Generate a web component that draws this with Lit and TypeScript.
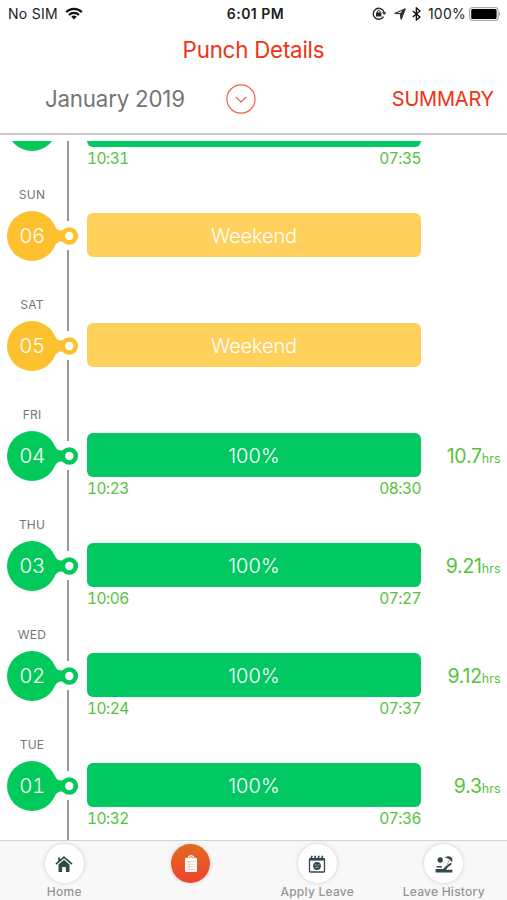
import { LitElement, html, css, svg, nothing } from "lit";
import { customElement, property } from "lit/decorators.js";
import { classMap } from "lit/directives/class-map.js";

interface Punch {
  day: string;
  date: string;
  weekend?: boolean;
  from?: string;
  to?: string;
  hours?: string;
}

const PUNCHES: Punch[] = [
  { day: "", date: "", from: "10:31", to: "07:35" },
  { day: "SUN", date: "06", weekend: true },
  { day: "SAT", date: "05", weekend: true },
  { day: "FRI", date: "04", from: "10:23", to: "08:30", hours: "10.7" },
  { day: "THU", date: "03", from: "10:06", to: "07:27", hours: "9.21" },
  { day: "WED", date: "02", from: "10:24", to: "07:37", hours: "9.12" },
  { day: "TUE", date: "01", from: "10:32", to: "07:36", hours: "9.3" },
];

@customElement("status-bar")
class StatusBar extends LitElement {
  static styles = css`
    :host { display: grid; grid-template-columns: 1fr auto 1fr; align-items: center; height: 27px; padding: 0 6px 0 8px; font-size: 14px; color: #1c1c1c; }
    .left, .right { display: flex; align-items: center; }
    .right { justify-content: flex-end; }
    .sim { letter-spacing: 0.3px; }
    .wifi { margin-left: 7px; }
    .time { font-weight: 600; font-size: 14px; letter-spacing: 0.5px; padding-left: 2px; }
    .lock { margin-right: 7px; }
    .arrow { margin-right: 6px; }
    .bt { margin-right: 7px; }
    .pct { margin-right: 3px; letter-spacing: 0.25px; }
    svg { display: block; }
  `;
  render() {
    return html`
      <div class="left">
        <span class="sim">No SIM</span>
        <svg class="wifi" width="18" height="13" viewBox="0 0 18 13" fill="none" stroke="#111" stroke-width="2.2">
          <path d="M1.2 5.1a11 11 0 0 1 15.6 0" /><path d="M4 8a7.1 7.1 0 0 1 10 0" />
          <path d="M9 12.6 6.2 9.8a4 4 0 0 1 5.6 0Z" fill="#111" stroke="none" />
        </svg>
      </div>
      <span class="time">6:01 PM</span>
      <div class="right">
        <svg class="lock" width="15" height="13" viewBox="0 0 15 13" fill="none" stroke="#222" stroke-width="1.3">
          <path d="M11.5 9.6A5.5 5.5 0 1 1 12 5" /><path d="M10 5.2h4.4l-2.2 2.9Z" fill="#222" stroke="none" />
          <rect x="4" y="5.5" width="5.4" height="4" fill="#222" stroke="none" /><path d="M5.3 6V4.9a1.4 1.4 0 0 1 2.8 0V6" stroke-width="1" />
        </svg>
        <svg class="arrow" width="12" height="12" viewBox="0 0 12 12" fill="none" stroke="#333" stroke-width="1.2" stroke-linejoin="round">
          <path d="M11 1 7.2 10.8 6.5 5.7 1 5.3Z" /><path d="M11 1 6.5 5.7 7.2 10.8Z" fill="#333" />
        </svg>
        <svg class="bt" width="9" height="14" viewBox="0 0 9 14" fill="none" stroke="#111" stroke-width="1.4">
          <path d="M.8 4 8 10 4.4 13V1L8 4 .8 10" />
        </svg>
        <span class="pct">100%</span>
        <svg width="32" height="14" viewBox="0 0 32 14">
          <rect x=".6" y=".6" width="28.6" height="12.8" rx="3" fill="#fff" stroke="#aaa" stroke-width="1.2" />
          <rect x="2.2" y="2" width="25.4" height="10" rx="1.6" fill="#000" />
          <path d="M30.2 5a2.4 2.4 0 0 1 0 4Z" fill="#999" />
        </svg>
      </div>
    `;
  }
}

@customElement("punch-row")
class PunchRow extends LitElement {
  @property({ attribute: false }) punch!: Punch;
  static styles = css`
    :host { display: block; }
    .row { display: grid; grid-template-columns: 87px 334px 1fr; height: 110px; box-sizing: border-box; --bar: #02c863; color: #56c23c; }
    .row.weekend { --bar: #ffd05c; }
    .side { background: linear-gradient(#999 0 40px, transparent 40px 69px, #999 69px) 66.5px 0 / 2px 100% no-repeat; }
    .day { width: 64px; height: 30px; line-height: 28px; text-align: center; font-size: 12px; color: #757575; letter-spacing: 0.2px; }
    .bubble { display: grid; grid-template-columns: 7px 50px 1fr; height: 50px; align-items: center; }
    .bubble svg { grid-area: 1 / 1 / 2 / 4; display: block; }
    .date { grid-area: 1 / 2; z-index: 1; text-align: center; font-size: 20.5px; line-height: 24px; color: #fff; font-weight: 350; font-variant-numeric: tabular-nums; letter-spacing: -0.4px; }
    .main { padding-top: 32px; }
    .bar { height: 44px; line-height: 47px; border-radius: 6px; background: var(--bar); color: #fff; text-align: center; font-size: 20px; font-weight: 350; letter-spacing: 0.1px; }
    .weekend .bar { letter-spacing: -0.15px; }
    .times { display: flex; justify-content: space-between; font-size: 15.5px; line-height: 24px; letter-spacing: -0.5px; font-variant-numeric: tabular-nums; }
    .hours { text-align: right; padding: 42px 6.5px 0 0; font-size: 19.5px; line-height: 26px; letter-spacing: -0.25px; white-space: nowrap; }
    .unit { font-size: 12.5px; letter-spacing: 0; }
  `;
  render() {
    const p = this.punch;
    const tone = p.weekend ? "#fdc02f" : "#02ca5a";
    return html`
      <div class=${classMap({ row: true, weekend: !!p.weekend })}>
        <div class="side">
          <div class="day">${p.day}</div>
          <div class="bubble">
            <svg width="87" height="50" viewBox="0 0 87 50">
              <circle cx="32" cy="25" r="25" fill=${tone} />
              <path d="M54 14Q57 20 62 19.5L66 18V32L62 30.5Q57 30 54 36Z" fill=${tone} />
              <circle cx="69.3" cy="25" r="6.5" fill="#fff" stroke=${tone} stroke-width="4.6" />
            </svg>
            <span class="date">${p.date}</span>
          </div>
        </div>
        <div class="main">
          <div class="bar">${p.weekend ? "Weekend" : p.date ? "100%" : nothing}</div>
          ${p.from ? html`<div class="times"><span>${p.from}</span><span>${p.to}</span></div>` : nothing}
        </div>
        <div class="hours">${p.hours ? html`${p.hours}<span class="unit">hrs</span>` : nothing}</div>
      </div>
    `;
  }
}

const ICONS = {
  home: svg`<path d="M1 9.2 9 2.2l8 7" fill="none" stroke="#34484f" stroke-width="1.7"/><path d="M3.5 9.6 9 4.8l5.5 4.8V17h-3.6v-5H7.1v5H3.5Z" fill="#34484f"/><path d="M3.2 2.6h2v2.6l-2 1.8Z" fill="#34484f"/>`,
  punch: svg`<path d="M3.5 3.4h11v13h-11Z" fill="#fff" stroke="#fff" stroke-linejoin="round"/><path d="M6 3.5a3 3 0 0 1 6 0" fill="#fff" stroke="#fff"/><path d="M6.9 3.4a2.1 1.7 0 0 1 4.2 0" fill="none" stroke="#e7632b" stroke-width=".9"/><path d="M5 6.7h8M5 9.3h8M5 11.9h8M5 14.5h8M7.2 6v9.6" stroke="#f6b9a8" stroke-width=".7"/>`,
  apply: svg`<rect x="1.5" y="3.6" width="15" height="13.4" rx=".8" fill="#fff" stroke="#34484f" stroke-width="1.3"/><path d="M1.5 3.6h15v2h-15Z" fill="#34484f"/><path d="m3 4 1-3.2M6.5 4l1-3.2M10 4l1-3.2M13.5 4l1-3.2" stroke="#34484f" stroke-width="1.6"/><circle cx="9" cy="11" r="3.9" fill="#34484f"/><path d="M6.8 9.5 8.4 10M9.7 10l1.6-.5M7.2 12.7q1.8-1.8 3.6 0" fill="none" stroke="#fff" stroke-width=".6"/>`,
  history: svg`<circle cx="5.2" cy="5" r="2.7" fill="#34484f"/><path d="M10 2.4Q14.4-.2 17.4 3.6L17.2 7.4Q14.6 3.4 10 2.4Z" fill="#34484f"/><path d="m14.8 3.6-2.6 6" stroke="#7d9199" stroke-width=".8"/><path d="M.6 14h7.4l3-3 4.8-3.2 1.2 1.2-4.4 3.6L11 14.8h6.4V17.4H.6Z" fill="#34484f"/><path d="M1.6 11.8h5.4" stroke="#34484f" stroke-width="1.5"/>`,
};

@customElement("tab-bar")
class TabBar extends LitElement {
  static styles = css`
    :host { display: grid; grid-template-columns: repeat(4, 126.5px); height: 60px; box-sizing: border-box; border-top: 1px solid #d4d4d4; padding-left: 1px; background: #f8f8f8; z-index: 1; }
    .tab { display: flex; flex-direction: column; align-items: center; padding-top: 3px; }
    .disc { display: grid; place-items: center; width: 39px; height: 39px; border-radius: 50%; background: #fff; box-shadow: 0 0 4px rgba(0, 0, 0, 0.17); }
    .active .disc { background: linear-gradient(#e06a22, #f0432f); }
    .label { margin-top: 1px; font-size: 12px; line-height: 16px; font-weight: 500; letter-spacing: 0.25px; color: #959595; white-space: nowrap; }
  `;
  render() {
    const tabs = [
      { label: "Home", icon: ICONS.home },
      { label: "", icon: ICONS.punch },
      { label: "Apply Leave", icon: ICONS.apply },
      { label: "Leave History", icon: ICONS.history },
    ];
    return tabs.map(
      (t) => html`<div class=${classMap({ tab: true, active: !t.label })}>
        <div class="disc"><svg width="18" height="18" viewBox="0 0 18 18">${t.icon}</svg></div>
        <span class="label">${t.label}</span>
      </div>`
    );
  }
}

@customElement("app-root")
class AppRoot extends LitElement {
  static styles = css`
    :host { display: flex; flex-direction: column; width: 507px; height: 900px; overflow: hidden; background: #fff; font-family: Inter, "Liberation Sans", sans-serif; }
    .title { height: 46px; line-height: 46px; text-align: center; font-size: 22.3px; letter-spacing: -0.2px; color: #ee3413; }
    .filter { display: flex; align-items: center; height: 62px; padding: 0 13px 8px 45px; border-bottom: 2px solid #cbcbcb; box-sizing: border-box; }
    .month { width: 181px; padding-bottom: 2px; font-size: 22.3px; letter-spacing: -0.2px; color: #757575; white-space: nowrap; }
    .summary { margin-left: auto; font-size: 20px; letter-spacing: -0.2px; color: #ee3413; }
    .list { flex: 1; min-height: 0; overflow: hidden; margin-top: 6px; }
    .track { margin-top: -70px; }
  `;
  render() {
    return html`
      <status-bar></status-bar>
      <div class="title">Punch Details</div>
      <div class="filter">
        <span class="month">January 2019</span>
        <svg width="30" height="30" viewBox="0 0 30 30" fill="none" stroke="#ee634b" stroke-width="1.2">
          <circle cx="15" cy="15" r="14.1" /><path d="m9.8 13 5.2 5 5.2-5" />
        </svg>
        <span class="summary">SUMMARY</span>
      </div>
      <div class="list"><div class="track">
        ${PUNCHES.map((p) => html`<punch-row .punch=${p}></punch-row>`)}
      </div></div>
      <tab-bar></tab-bar>
    `;
  }
}
